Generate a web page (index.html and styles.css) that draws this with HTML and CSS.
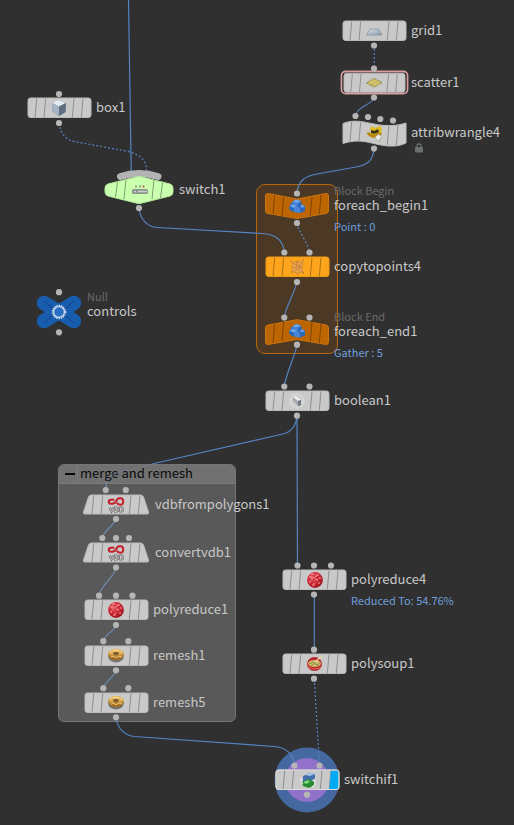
FILE: index.html
```
<!DOCTYPE html>
<html lang="en">
<head>
<meta charset="utf-8">
<meta name="viewport" content="width=device-width, initial-scale=1">
<title>Network editor</title>
<link rel="stylesheet" href="styles.css">
</head>
<body>
<svg class="defs" aria-hidden="true">
  <defs>
    <linearGradient id="steel" x1="0" y1="0" x2="1" y2="1"><stop offset="0" stop-color="#dfe6ee"/><stop offset="1" stop-color="#8595a8"/></linearGradient>
    <radialGradient id="ruby" cx=".4" cy=".35" r=".7"><stop offset="0" stop-color="#f06a6c"/><stop offset=".5" stop-color="#d42a38"/><stop offset="1" stop-color="#96101e"/></radialGradient>
    <linearGradient id="gold" x1="0" y1="0" x2="0" y2="1"><stop offset="0" stop-color="#f0c060"/><stop offset="1" stop-color="#9a6012"/></linearGradient>
    <circle id="port" r="3.1" class="port"/>
    <g id="ticks"><path class="tick" d="M-22.300 -9.500L-24 9.500M-13.300 -9.500L-15 9.500M15 -9.500L13.300 9.500M24 -9.500L22.300 9.500"/></g>
    <g id="tile"><rect class="edge" x="-31" y="-10" width="63" height="19.500" rx="2.500"/><use href="#ticks"/></g>
    <g id="trapezoid"><path class="edge" d="M-24.500 -10H24.500Q26.500 -10 27.500 -8L32.500 7Q33 9 31.500 9H-31.500Q-33 9 -32.500 7L-27.500 -8Q-26.500 -10 -24.500 -10Z"/><use href="#ticks"/></g>
    <g id="icon-sphere">
      <circle r="7.900" fill="url(#ruby)"/>
      <path d="M-4 -6H-1M1 -5H4M-6 -3H-3M-1 -3H2M4 -2H6M-5 0H-2M0 0H3M-6 2H-4M-2 3H1M3 3H5M-3 5H0" stroke="#ffaeb0" stroke-width=".9"/>
      <path d="M-6 -1L-3 1L-1 -1L2 2L5 0M-2 -5L1 -2L4 -4M-4 4L-1 2L2 5" fill="none" stroke="#a81422" stroke-width=".7"/>
    </g>
    <g id="icon-donut">
      <ellipse cy="1.600" rx="7.800" ry="5.800" fill="#77746f"/>
      <ellipse cy="-.7" rx="7.900" ry="5.600" fill="url(#gold)"/>
      <path d="M-6.500 -2.500Q0 -6.500 6.500 -2.500" fill="none" stroke="#ffe3a0" stroke-width="1"/>
      <ellipse cy="-1.500" rx="2.700" ry="1.300" fill="#6b5130"/>
      <path d="M-6 -1L-3 -1M-5 2L-2 1L0 3L3 1L6 2M3 -1L6 -1" fill="none" stroke="#ffe3a0" stroke-width=".7"/>
    </g>
    <g id="icon-vdb">
      <path d="M-1.500 -5.300H-5Q-7.200 -5.200 -7.200 -3.300T-5 -1.200Q-1.500 -1 0 -3.500Q1.300 -7 4.200 -7Q7.200 -6.800 7.200 -3.500T4.200 -.3Q2 -.3 .8 -2.300" fill="none" stroke="#c4252e" stroke-width="2.100"/>
      <path d="M-6.500 2.500L-4.500 6.500L-2.500 2.500M-1 2.500V6.500H0Q2.500 6.500 2.500 4.500T0 2.500ZM4.500 2.500V6.500H5.500Q7 6.500 7 5.500T5.500 4.500H4.500H5.500Q6.700 4.300 6.500 3.300T5.500 2.500Z" fill="none" stroke="#65605e" stroke-width="2"/>
      <path d="M-6.500 2.500L-4.500 6.500L-2.500 2.500M-1 2.500V6.500H0Q2.500 6.500 2.500 4.500T0 2.500ZM4.500 2.500V6.500H5.500Q7 6.500 7 5.500T5.500 4.500H4.500H5.500Q6.700 4.300 6.500 3.300T5.500 2.500Z" fill="none" stroke="#ddd" stroke-width=".8"/>
    </g>
    <g id="icon-block">
      <path d="M-7.500 0L-5 -4L-1 -6.500L4 -5L5 -1L8 0V5L3 7L-5 5.500L-8 3Z" fill="#2b67ba"/>
      <path d="M-5 -4L-1 -6.500L4 -5L1 -3ZM-7.500 0L-4 -2L0 0L-3 2ZM3 0L5 -1L8 0L5 2Z" fill="#6fa7ee"/>
      <path d="M-5 -4L1 -3V0L-4 -1ZM-3 2V6L3 7V2L0 0Z" fill="#4585d8"/>
    </g>
  </defs>
</svg>

<main class="network">
  <section class="block" aria-label="For-each block"></section>
  <section class="netbox">
    <header class="netbox__header">
      <button class="netbox__toggle" type="button" aria-label="Collapse"></button>
      <h2 class="netbox__title">merge and remesh</h2>
    </header>
  </section>

  <svg class="wires" aria-hidden="true">
    <circle cx="307" cy="780" r="32.500" fill="#44689f" stroke="none"/><circle cx="307" cy="780" r="22" fill="#9271cb" stroke="none"/>
    <path d="M128.500 0L131.300 176"/>
    <path class="dotted" d="M59 123C61 134 65 139 74 141.500L126 151C139 154 147 159 146.500 172"/>
    <path d="M139 208C140 219 147 227 157 227.500L262 233.500C275 234 283 239 284.300 252"/>
    <path class="dotted" d="M374.300 45V68"/>
    <path d="M374.300 97C373 105 357 106 355.500 116"/>
    <path d="M374 149C373 160 368 165 356 167L317 174C305 176 298 181 297 193"/>
    <path class="dotted" d="M297 223C298 231 308 243 309.500 252"/>
    <path d="M297 282C295 292 286 306 284.300 317"/>
    <path d="M297 345C295 356 286 374 284.300 386"/>
    <path d="M297 416C296 427 291 432 283 434L152 464"/>
    <path class="veiled" d="M152 464L119 472C112 474 108 478 106.500 483"/>
    <path class="dim" d="M106.500 483L105.500 490"/>
    <path d="M297 416L297.500 566"/>
    <path class="dim" d="M115.700 519C115 525 103 531 102 538M116 568C115 576 100 586 99 596M116 625C115 631 104 635 103.300 641M116 670C115 677 104 682 103.300 689"/>
    <path d="M116 718C118 729 124 735 134 736.500L274 746.500C286 747.500 293 753 294.500 765"/>
    <path d="M314.300 595V650"/>
    <path class="dotted" d="M314.300 679L319.500 765"/>
  </svg>

  <article class="node n-grid1">
    <svg class="node__shape" viewBox="-32 -10 64 20" aria-hidden="true">
      <use href="#tile"/><use href="#port" y="14.500"/>
      <path d="M-4 -2H4.500L8 4H-7.500Z" fill="url(#steel)" stroke="#8995a2" stroke-width=".8"/>
    </svg>
    <span class="node__name">grid1</span>
  </article>

  <article class="node n-scatter1">
    <svg class="node__shape" viewBox="-32 -10 64 20" aria-hidden="true">
      <rect x="-32.500" y="-11.500" width="66" height="22" rx="4" fill="#111" stroke="#d69c9f" stroke-width="1.800"/>
      <g transform="scale(.97)"><use href="#tile"/></g>
      <use href="#port" y="-14.500"/><use href="#port" y="14.500"/>
      <path d="M-7.500 0L0 -4.500L8 -.5L0 4Z" fill="#c5b357" stroke="#8a7c3a" stroke-width=".7"/>
      <path d="M-4 -2L4 2M-1 -3.500L6 0M-5 1L3 -3M-1 3L6 -1" stroke="#f3e9a5" stroke-width="1" stroke-dasharray="1 1.500"/>
    </svg>
    <span class="node__name">scatter1</span>
  </article>

  <article class="node n-wrangle">
    <svg class="node__shape" viewBox="-32 -10 64 20" aria-hidden="true">
      <path class="edge" d="M-31 -9.500C-20 -14 -10 -11 0 -9C12 -6.500 23 -7 32 -10V10C22 15 10 13 0 10.500C-12 7.500 -20 7 -31 10.500Z"/>
      <path class="tick" d="M-22.300 -11L-24 8M-13.300 -11L-15 8M15 -7.500L13.300 12M24 -8.500L22.300 12"/>
      <use href="#port" x="-18.500" y="-17"/><use href="#port" x="-6" y="-16"/><use href="#port" x="6.300" y="-14"/><use href="#port" x="19" y="-12.500"/><use href="#port" y="15.500"/>
      <path d="M-4 -3Q-4 -7 -1 -6L2 -5Q4 -8 7 -6Q9 -4 7 -1L4 2L-1 2Z" fill="#e0bb20"/>
      <path d="M-7.500 0Q-5 -2 -2 1Q2 2 4 0Q7 -1 8 0Q7 4 2 5Q-5 5 -7.500 0Z" fill="#b98b0b"/>
      <path d="M-3 -3Q1 -1 4 -4L5 -1Q1 2 -3 0Z" fill="#3f3316"/>
      <path d="M1 4L5 1L8 5L5 6L6 9L3 7Z" fill="#f0f0e8" stroke="#888" stroke-width=".5"/>
    </svg>
    <span class="node__name">attribwrangle4</span>
    <svg class="node__lock" viewBox="0 0 8 10" role="img" aria-label="Locked"><path d="M2 5V3Q2 1 4 1T6 3V5" fill="none" stroke="#68716f" stroke-width="1.300"/><rect y="4" width="8" height="5.500" rx=".7" fill="#68716f"/></svg>
  </article>

  <article class="node n-box1">
    <svg class="node__shape" viewBox="-32 -10 64 20" aria-hidden="true">
      <use href="#tile"/><use href="#port" y="-14"/><use href="#port" y="15"/>
      <path d="M-7 -5L-1 -8L7 -5L6.500 4L0 8L-6.500 4Z" fill="#8193a5"/>
      <path d="M-7 -5L-1 -8L7 -5L0 -1.500Z" fill="#e3ebf3"/><path d="M0 -1.500L7 -5L6.500 4L0 8Z" fill="#5e6e80"/><path d="M-7 -5L0 -1.500V8L-6.500 4Z" fill="#a4b4c4"/>
    </svg>
    <span class="node__name">box1</span>
  </article>

  <article class="node node--wide n-switch1">
    <svg class="node__shape" viewBox="-32 -10 64 20" aria-hidden="true">
      <path d="M-18.500 -13.500Q0 -19.500 19 -13.500" fill="none" stroke="#b3b3b3" stroke-width="7" stroke-linecap="round"/>
      <path class="edge edge--green" d="M-31 -6L-3 -13Q0 -14 3 -13L31 -6Q34 -5 34 -2V2Q34 5 31 6L3 13Q0 14 -3 13L-31 6Q-34 5 -34 2V-2Q-34 -5 -31 -6Z"/>
      <path class="tick tick--green" d="M-21.500 -8L-23.500 7M-13 -10L-15 9M15 -10L13 9M23.500 -7L21.500 8"/>
      <use href="#port" y="18"/>
      <rect x="-7" y="-1" width="16" height="5" rx="1.500" fill="#8e9690"/><path d="M-5 1.500H-3M-1 1.500H8" stroke="#c5cec8" stroke-width="1.300"/>
      <path d="M-3 -4.500V-2.500M1 -4.500V-2.500" stroke="#7e8974" stroke-width="1.500"/><path d="M4.500 -4.500V-2.500" stroke="#c75036" stroke-width="1.700"/>
    </svg>
    <span class="node__name">switch1</span>
  </article>

  <article class="node n-begin">
    <svg class="node__shape" viewBox="-32 -10 64 20" aria-hidden="true">
      <path class="edge edge--rust" d="M-29 -12.500L0 -7L29 -12.500Q31.500 -12.500 31.500 -10V5Q31.500 7 29 7.500L0 12.500L-29 7.500Q-31.500 7 -31.500 5V-10Q-31.500 -12.500 -29 -12.500Z"/>
      <path class="tick tick--rust" d="M-22.300 -11L-24 8M-13.300 -9L-15 10M15 -9L13.300 10M24 -11L22.300 8"/>
      <use href="#port" y="-12.500"/><use href="#port" y="17"/><use href="#icon-block"/>
    </svg>
    <span class="node__kind">Block Begin</span>
    <span class="node__name">foreach_begin1</span>
    <span class="node__info">Point : 0</span>
  </article>

  <article class="node n-copy">
    <svg class="node__shape" viewBox="-32 -10 64 20" aria-hidden="true">
      <use href="#tile"/>
      <use href="#port" x="-12.700" y="-14.500"/><use href="#port" x="12.500" y="-14.500"/><use href="#port" y="15"/>
      <path d="M-5 -4L0 -5L6 -5L5 0L6 5L1 6L-4 5L-5 0Z" fill="#eda24a" stroke="#c5803a" stroke-width=".6"/>
      <path d="M-5 -4L5 0L-4 5M0 -5L-1 1L6 5M6 -5L-1 1L-5 0" fill="none" stroke="#b87b3d" stroke-width=".6"/>
      <path d="M-6 -6h1M6 -7h1M0 -6h1M-6 5h1M6 6h1M0 7h1M2 0h1" stroke="#6d5a44" stroke-width="1.200"/>
    </svg>
    <span class="node__name">copytopoints4</span>
  </article>

  <article class="node n-end">
    <svg class="node__shape" viewBox="-32 -10 64 20" aria-hidden="true">
      <path class="edge edge--rust" d="M-29 -7L-2 -12Q0 -12.500 2 -12L29 -7Q31.500 -6.500 31.500 -4.500V10Q31.500 12.500 29 12.500L0 7.500L-29 12.500Q-31.500 12.500 -31.500 10V-4.500Q-31.500 -6.500 -29 -7Z"/>
      <path class="tick tick--rust" d="M-22.300 -8L-24 11M-13.300 -10L-15 9M15 -10L13.300 9M24 -8L22.300 11"/>
      <use href="#port" x="-12.700" y="-14.500"/><use href="#port" x="12.500" y="-14.500"/><use href="#port" y="12.700"/><use href="#icon-block" y="-1.500"/>
    </svg>
    <span class="node__kind">Block End</span>
    <span class="node__name">foreach_end1</span>
    <span class="node__info">Gather : 5</span>
  </article>

  <article class="node n-boolean">
    <svg class="node__shape" viewBox="-32 -10 64 20" aria-hidden="true">
      <use href="#tile"/><use href="#port" x="-12.700" y="-14.500"/><use href="#port" x="12.500" y="-14.500"/><use href="#port" y="14.700"/>
      <circle r="7" fill="#d0d0d0" stroke="#e6e6e6" stroke-dasharray="3 1.500"/>
      <path d="M-4 -4L-1 -5L4 -1V4L1 5L-4 0Z" fill="#a4aab3"/><path d="M-4 -4L-1 -5L4 -1L1 0Z" fill="#eceff3"/><path d="M1 0L4 -1V4L1 5Z" fill="#737983"/>
    </svg>
    <span class="node__name">boolean1</span>
  </article>

  <article class="node node--null n-controls">
    <svg class="node__shape" viewBox="-32 -10 64 20" aria-hidden="true">
      <path d="M-15 -9L15 9M15 -9L-15 9" stroke="#185cae" stroke-width="14.500" stroke-linecap="round"/>
      <path d="M-15 -11L-6 -3M15 -11L6 -3M-15 11L-6 3M15 11L6 3" stroke="#103f7d"/>
      <circle r="5.500" fill="#286fc5" stroke="#c1d2e9" stroke-width="1.500"/><circle r="6.700" fill="none" stroke="#e3e8ef" stroke-width="1.200" stroke-dasharray="1.200 1.200"/>
      <use href="#port" y="-19.800"/><use href="#port" y="20.300"/>
    </svg>
    <span class="node__kind">Null</span>
    <span class="node__name">controls</span>
  </article>

  <article class="node node--trapezoid n-vdb">
    <svg class="node__shape" viewBox="-32 -10 64 20" aria-hidden="true"><use href="#trapezoid"/><use href="#port" x="-10.300" y="-15"/><use href="#port" x="9.800" y="-15"/><use href="#port" y="14"/><use href="#icon-vdb"/></svg>
    <span class="node__name">vdbfrompolygons1</span>
  </article>
  <article class="node node--trapezoid n-convert">
    <svg class="node__shape" viewBox="-32 -10 64 20" aria-hidden="true"><use href="#trapezoid"/><use href="#port" x="-13.700" y="-15"/><use href="#port" y="-15"/><use href="#port" x="13" y="-15"/><use href="#port" y="14.500"/><use href="#icon-vdb"/></svg>
    <span class="node__name">convertvdb1</span>
  </article>
  <article class="node n-reduce1">
    <svg class="node__shape" viewBox="-32 -10 64 20" aria-hidden="true"><use href="#tile"/><use href="#port" x="-17" y="-14.300"/><use href="#port" y="-14.300"/><use href="#port" x="16.500" y="-14.300"/><use href="#port" y="15"/><use href="#icon-sphere"/></svg>
    <span class="node__name">polyreduce1</span>
  </article>
  <article class="node n-remesh1">
    <svg class="node__shape" viewBox="-32 -10 64 20" aria-hidden="true"><use href="#tile"/><use href="#port" x="-12.700" y="-14.800"/><use href="#port" x="12.300" y="-14.800"/><use href="#port" y="14.300"/><use href="#icon-donut" y="-1"/></svg>
    <span class="node__name">remesh1</span>
  </article>
  <article class="node n-remesh5">
    <svg class="node__shape" viewBox="-32 -10 64 20" aria-hidden="true"><use href="#tile"/><use href="#port" x="-12.700" y="-14.800"/><use href="#port" x="12.300" y="-14.800"/><use href="#port" y="14.300"/><use href="#icon-donut" y="-1"/></svg>
    <span class="node__name">remesh5</span>
  </article>

  <article class="node n-reduce4">
    <svg class="node__shape" viewBox="-32 -10 64 20" aria-hidden="true"><use href="#tile"/><use href="#port" x="-16.500" y="-14.500"/><use href="#port" y="-14.500"/><use href="#port" x="17" y="-14.500"/><use href="#port" y="14.500"/><use href="#icon-sphere" x="1"/></svg>
    <span class="node__name">polyreduce4</span>
    <span class="node__info">Reduced To: 54.76%</span>
  </article>
  <article class="node n-soup">
    <svg class="node__shape" viewBox="-32 -10 64 20" aria-hidden="true">
      <use href="#tile"/><use href="#port" y="-14.300"/><use href="#port" y="14.700"/>
      <ellipse cx=".5" rx="7.500" ry="7" fill="#b7262a"/><ellipse cx=".5" cy="-.5" rx="6.500" ry="3.500" fill="#d9b56c"/>
      <path d="M-5 0L-1 -2L3 1L6 -1M-3 2L1 -1L4 2" fill="none" stroke="#7e9a4d" stroke-width="1"/><path d="M1 -2L8 -8" stroke="#e5d9a1" stroke-width="1.500"/><path d="M-6 3Q1 7 7 3" fill="none" stroke="#e26b55"/>
    </svg>
    <span class="node__name">polysoup1</span>
  </article>
  <article class="node n-switchif">
    <svg class="node__shape" viewBox="-32 -10 64 20" aria-hidden="true">
      <use href="#tile"/><path d="M24 -9.500H29Q31.500 -9.500 31.500 -7V7Q31.500 9 29 9H22.300Z" fill="#00aaf4"/>
      <rect x="-31" y="-10" width="63" height="19.500" rx="2.500" fill="none" stroke="#ddd"/>
      <use href="#port" x="-12.500" y="-14.500"/><use href="#port" x="12.500" y="-14.500"/><use href="#port" y="14.700"/>
      <path d="M-4 -4L3 -7L8 -6V-2L4 1L-4 3Z" fill="#436fae"/><path d="M-2 -5L3 -7L8 -6L3 -4Z" fill="#a7c4eb"/>
      <path d="M-5 2L2 -1L7 2V5L2 8L-4 6Z" fill="#278c35"/><path d="M-4 2L1 0L3 2L-1 4Z" fill="#80d676"/><path d="M-6 -2V2L-4 4M8 0V5L5 7" stroke="#eee" fill="none"/>
    </svg>
    <span class="node__name">switchif1</span>
  </article>
</main>
</body>
</html>
```
FILE: styles.css
```
* { box-sizing: border-box; }

body {
  margin: 0;
  background: #303030;
  color: #c8c8c8;
  font-family: "Noto Sans CJK SC", "Noto Sans", sans-serif;
}

.defs { position: absolute; width: 0; height: 0; }

.network {
  position: relative;
  min-height: 100vh;
  overflow: hidden;
}

.wires {
  position: absolute;
  inset: 0;
  width: 100%;
  height: 100%;
  fill: none;
  stroke: #5583c2;
  stroke-width: 1.2;
  pointer-events: none;
}
.wires .dotted { stroke-dasharray: 2 2; }
.wires .dim { stroke: #6f8db3; }
.wires .veiled { stroke: #7587a0; opacity: 0.5; }

/* Frames behind the nodes */
.block {
  position: absolute;
  left: 256px;
  top: 184px;
  width: 82px;
  height: 170px;
  border: 1px solid #b4670f;
  border-radius: 9px;
  background: #4b3925;
}

.netbox {
  position: absolute;
  left: 58px;
  top: 464px;
  width: 178px;
  height: 258px;
  border: 1px solid #757575;
  border-radius: 6px;
  background: #595959;
  overflow: hidden;
}
.netbox__header {
  display: flex;
  align-items: stretch;
  height: 19px;
  border-bottom: 1px solid #7c7c7c;
  background: #717171;
}
.netbox__toggle {
  display: grid;
  place-items: center;
  width: 19px;
  padding: 0 0 0 4px;
  border: 0;
  border-right: 1px solid #7c7c7c;
  background: none;
}
.netbox__toggle::before {
  content: "";
  width: 10px;
  height: 2px;
  background: #080808;
}
.netbox__title {
  margin: 0;
  padding-left: 2px;
  color: #0a0a0a;
  font-size: 13px;
  font-weight: 400;
  line-height: 16px;
}

/* Nodes: shape in the first column, captions in the second */
.node {
  position: absolute;
  display: grid;
  grid-template-columns: 64px auto;
  grid-template-rows: 12px 20px 22px;
  column-gap: 5px;
  align-items: start;
  white-space: nowrap;
}
.node--wide { column-gap: 8px; }
.node--trapezoid { column-gap: 7px; }
.node--null { grid-template-columns: 60px auto; column-gap: 0; }

.node__shape {
  grid-area: 2 / 1;
  width: 64px;
  height: 20px;
  overflow: visible;
}
.node__kind { grid-area: 1 / 2; color: #6a6a6a; font-size: 11px; line-height: 12px; }
.node__name { grid-area: 2 / 2; font-size: 13px; line-height: 18px; }
.node__info { grid-area: 3 / 2; color: #6f9fdc; font-size: 11px; line-height: 20px; }
.node__lock { grid-area: 3 / 2; width: 8px; height: 10px; margin-left: 4px; }

.port { fill: #b5b5b5; }
.edge { fill: var(--face, #c9c9c9); stroke: var(--rim, #bbb); stroke-width: 1; }
.tick { fill: none; stroke: var(--tick, #8f8f8f); stroke-width: 1; }
.edge--green { fill: #c9ffae; stroke: #b5eb9c; }
.tick--green { stroke: #7f9f70; }
.edge--rust { fill: #bd6500; stroke: #cc7410; }
.tick--rust { stroke: #814500; }
.n-copy { --face: #ffa51c; --rim: #f39b16; --tick: #ac7014; }

/* Canvas coordinates */
.n-grid1 { left: 342px; top: 9px; }
.n-scatter1 { left: 342px; top: 61px; }
.n-wrangle { left: 342px; top: 111px; }
.n-box1 { left: 27px; top: 86px; }
.n-switch1 { left: 107px; top: 168px; }
.n-begin { left: 265px; top: 184px; }
.n-copy { left: 265px; top: 245px; }
.n-end { left: 265px; top: 310px; }
.n-boolean { left: 265px; top: 379px; }
.n-controls { left: 27px; top: 290px; }
.n-vdb { left: 84px; top: 483px; }
.n-convert { left: 84px; top: 531px; }
.n-reduce1 { left: 84px; top: 588px; }
.n-remesh1 { left: 84px; top: 634px; }
.n-remesh5 { left: 84px; top: 681px; }
.n-reduce4 { left: 282px; top: 558px; }
.n-soup { left: 282px; top: 642px; }
.n-switchif { left: 275px; top: 758px; }
```
